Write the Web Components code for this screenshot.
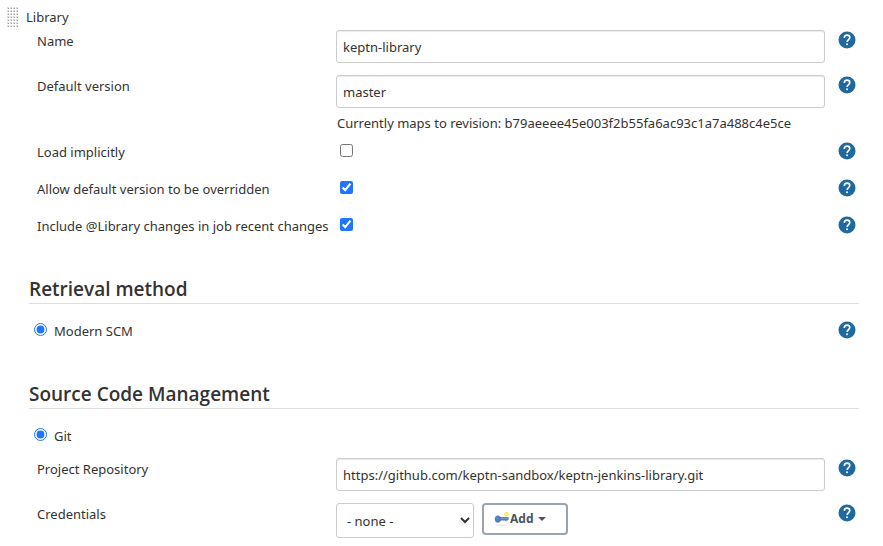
<!DOCTYPE html>
<html lang="en">
<head>
<meta charset="utf-8">
<title>Library configuration</title>
<style>
body { margin: 0; background: #fff; color: #333; font: 13px/20px "Noto Sans", "Open Sans", sans-serif; }
</style>
</head>
<body>
<library-config>
  <text-field label="Name" value="keptn-library"></text-field>
  <text-field label="Default version" value="master">Currently maps to revision: b79aeeee45e003f2b55fa6ac93c1a7a488c4e5ce</text-field>
  <check-field label="Load implicitly"></check-field>
  <check-field label="Allow default version to be overridden" checked></check-field>
  <check-field label="Include @Library changes in job recent changes" checked></check-field>
  <config-section heading="Retrieval method">
    <radio-field label="Modern SCM" help></radio-field>
  </config-section>
  <config-section heading="Source Code Management">
    <radio-field label="Git"></radio-field>
    <text-field label="Project Repository" value="https://github.com/keptn-sandbox/keptn-jenkins-library.git"></text-field>
    <credentials-field></credentials-field>
  </config-section>
</library-config>

<script>
class Base extends HTMLElement {
  connectedCallback() {
    if (this.shadowRoot) return;
    this.attachShadow({ mode: "open" }).innerHTML = this.template();
  }
  get label() { return this.getAttribute("label"); }
}

const accent = "#1f75fe";

customElements.define("help-button", class extends Base {
  template() {
    return `<style>
      :host { display: block; }
      button { display: block; width: 18px; height: 18px; padding: 0; border: 0; background: none; cursor: pointer; }
      svg { display: block; }
    </style>
    <button type="button" aria-label="Help">
      <svg width="18" height="18" viewBox="0 0 18 18">
        <circle cx="9" cy="9" r="8.5" fill="#20699e"/>
        <path d="M6.3 6.9C6.3 5.2 7.4 4.1 9 4.1s2.8 1 2.8 2.5c0 1.9-2.7 2.1-2.7 4.4" fill="none" stroke="#fff" stroke-width="1.6"/>
        <rect x="8.2" y="12.4" width="1.7" height="1.7" fill="#fff"/>
      </svg>
    </button>`;
  }
});

customElements.define("setting-row", class extends Base {
  template() {
    return `<style>
      :host { display: grid; grid-template-columns: 299px minmax(0, 1fr) 21px; padding-left: 8px; }
      .control { padding-right: 13px; }
      .label, help-button { padding-top: 1px; }
    </style>
    <div class="label"><slot name="label"></slot></div>
    <div class="control"><slot></slot></div>
    <help-button></help-button>`;
  }
});

customElements.define("text-field", class extends Base {
  template() {
    const note = this.textContent.trim() ? `<div class="note"><slot></slot></div>` : "";
    return `<style>
      :host { display: block; }
      input { display: block; box-sizing: border-box; width: 100%; height: 33px; padding: 1px 6px 0; border: 1px solid #ccc; border-radius: 3px;
        box-shadow: inset 0 1px 1px rgba(0,0,0,.08); background: #fff; color: #333; font: inherit; }
      .note { margin: 7px 0 -2px; padding-left: 1px; line-height: 16px; }
    </style>
    <setting-row>
      <label slot="label" for="value">${this.label}</label>
      <input id="value" type="text" value="${this.getAttribute("value")}">
      ${note}
    </setting-row>`;
  }
});

customElements.define("check-field", class extends Base {
  template() {
    return `<style>
      :host { display: block; }
      setting-row { min-height: 25px; }
      input { display: block; width: 13px; height: 13px; margin: 3px 4px; accent-color: ${accent}; }
    </style>
    <setting-row>
      <label slot="label" for="value">${this.label}</label>
      <input id="value" type="checkbox" ${this.hasAttribute("checked") ? "checked" : ""}>
    </setting-row>`;
  }
});

customElements.define("radio-field", class extends Base {
  template() {
    return `<style>
      :host { display: flex; justify-content: space-between; min-height: 21px; padding: 0 3px 0 5px; }
      label { display: flex; align-items: center; gap: 7px; height: 21px; }
      input { width: 13px; height: 13px; margin: 0 0 2px; accent-color: ${accent}; }
      help-button { padding-top: 1px; }
    </style>
    <label><input type="radio" name="choice" checked><span>${this.label}</span></label>
    ${this.hasAttribute("help") ? "<help-button></help-button>" : ""}`;
  }
});

customElements.define("credentials-field", class extends Base {
  template() {
    return `<style>
      :host { display: block; }
      .controls { display: flex; align-items: flex-start; gap: 8px; }
      select { width: 138px; height: 35px; padding: 0 6px; border: 1px solid #ccc; border-radius: 3px; background: #fff; color: #333; font: inherit; }
      button { display: flex; align-items: center; box-sizing: border-box; width: 86px; height: 32px; padding: 0 10px; border: 2px solid #98a5b0; border-radius: 4px;
        background: #fff; color: #4d545d; font: bold 12px/20px "Noto Sans", "Open Sans", sans-serif; }
      .caret { margin-left: 5px; }
    </style>
    <setting-row>
      <label slot="label" for="value">Credentials</label>
      <div class="controls">
        <select id="value"><option>- none -</option></select>
        <button type="button">
          <svg width="16" height="16" viewBox="0 0 16 16" aria-hidden="true">
            <ellipse cx="7" cy="14" rx="6" ry="1" fill="#eee"/>
            <circle cx="12.5" cy="3.2" r="1.6" fill="#fffbc0" stroke="#f7e94d" stroke-width="1.4"/>
            <path d="M1.500 5.500C3 4 5 4 6.500 6H14l1 1-1 2.500h-1.300l-.7 1-1-1H7c-1.500 2.500-4 3-5.500 1-1-1.500-.9-3 0-5z" fill="#4f7ebb"/>
            <path d="M7 7.300h7" stroke="#7ba2d2"/>
            <circle cx="3.200" cy="7.500" r="1.300" fill="#5f8cc6"/>
          </svg>
          <span>Add</span>
          <svg class="caret" width="8" height="4" viewBox="0 0 8 4" aria-hidden="true"><path d="M0 0h8L4 4z" fill="#4d545d"/></svg>
        </button>
      </div>
    </setting-row>`;
  }
});

customElements.define("config-section", class extends Base {
  template() {
    return `<style>
      :host { display: block; padding: 24px 0 4px; }
      h2 { margin: 0 0 16px; padding-bottom: 1px; border-bottom: 1px solid #ddd; font: 600 19px/26px "Open Sans", "Noto Sans", sans-serif; }
      .body { display: grid; gap: 12px; }
    </style>
    <h2>${this.getAttribute("heading")}</h2>
    <div class="body"><slot></slot></div>`;
  }
});

customElements.define("library-config", class extends Base {
  template() {
    return `<style>
      :host { display: block; padding: 7px 24px 4px 7px; }
      header { display: flex; gap: 7px; height: 23px; }
      .grip { width: 12px; height: 20px; }
      .body { display: grid; gap: 12px; padding-left: 22px; }
    </style>
    <header>
      <svg class="grip" viewBox="0 0 12 20" aria-hidden="true">
        <defs><pattern id="dots" width="3" height="3" patternUnits="userSpaceOnUse">
          <rect width="2" height="2" fill="#ddd"/><rect x="1" y="1" width="1" height="1" fill="#999"/>
        </pattern></defs>
        <rect width="12" height="20" fill="url(#dots)"/>
      </svg>
      <span>Library</span>
    </header>
    <div class="body"><slot></slot></div>`;
  }
});
</script>
</body>
</html>
